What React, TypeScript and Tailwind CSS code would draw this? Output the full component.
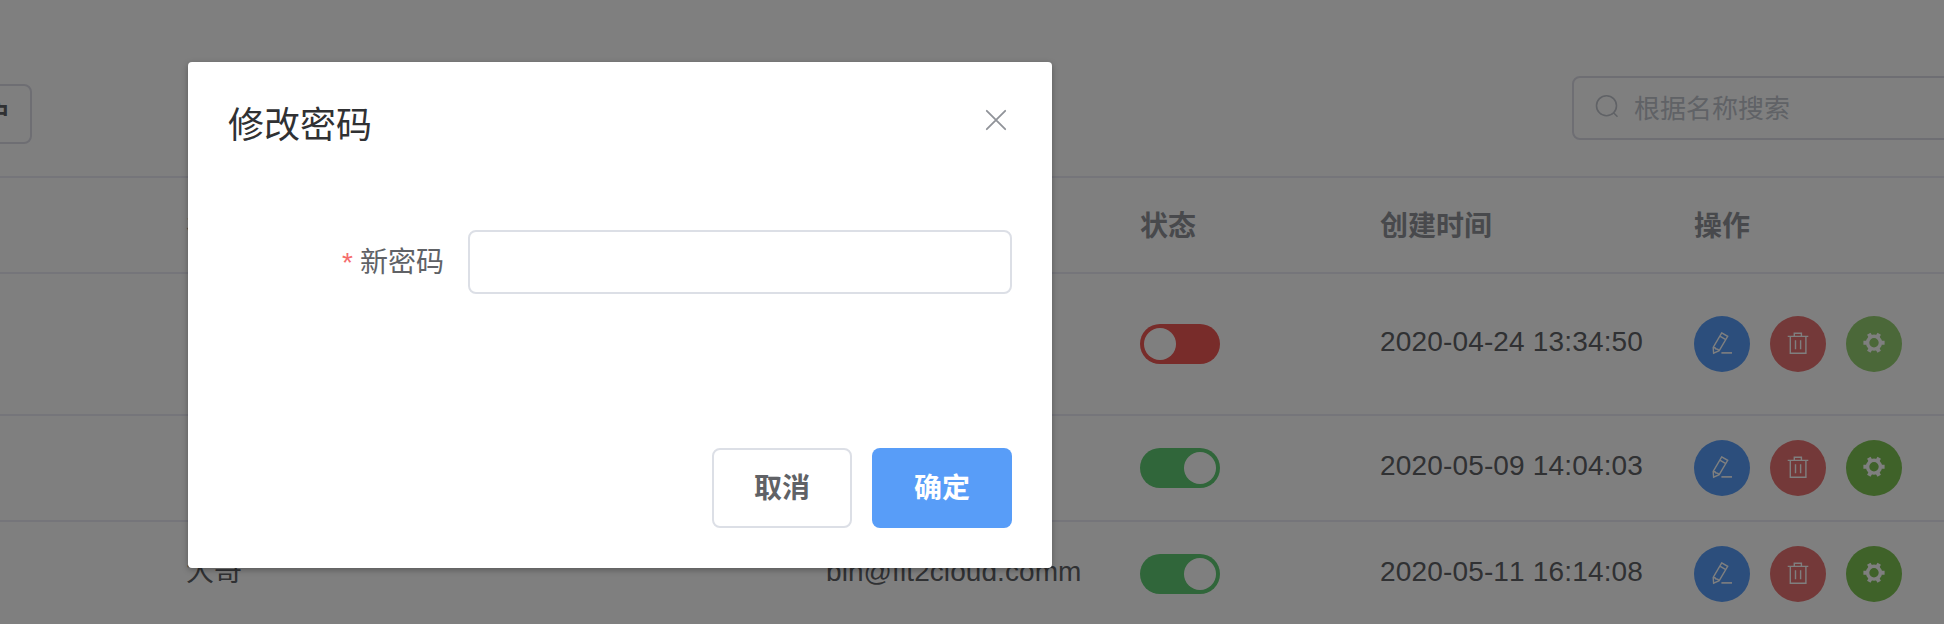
import React from 'react';

const columns =
  'grid grid-cols-[186px_640px_314px_240px_314px_250px] items-center';

function EditIcon() {
  return (
    <svg className="size-7" viewBox="0 0 28 28" fill="none" stroke="#fff" strokeWidth="1.4">
      <path d="M13.7 2.9 19.7 6.3 11.2 20.6 5.6 23.2 5.2 17.4ZM11.9 6.2 17.8 9.7M5.4 17.2 Q7.2 17.3 7.9 19 Q9.9 18.8 11.2 20.6" />
      <path d="M13.4 22.9H24" strokeWidth="1.6" />
    </svg>
  );
}

function DeleteIcon() {
  return (
    <svg className="size-7" viewBox="0 0 28 28" fill="none" stroke="#fff" strokeWidth="1.4">
      <path d="M3.7 6.4H24.3M6.3 6.4V23.3H21.9V6.4M10.3 6.2V3.2H17.4V6.2M11.5 10.2V19.2M16.6 10.2V19.2" />
    </svg>
  );
}

function SettingIcon() {
  return (
    <svg className="size-7" viewBox="0 0 28 28" fill="none" stroke="#fff">
      <circle cx="14" cy="12.7" r="6.4" strokeWidth="3.4" />
      <path
        strokeWidth="4"
        d="M21.2 12.7H24.6M3.4 12.7H6.8M17.6 6.5 19.2 3.7M10.4 6.5 8.8 3.7M17.6 18.9 19.2 21.7M10.4 18.9 8.8 21.7"
      />
    </svg>
  );
}

function Switch({ on }: { on: boolean }) {
  return (
    <div
      className={
        on
          ? 'flex h-10 w-20 justify-end rounded-full bg-[#61cc74] p-1'
          : 'flex h-10 w-20 justify-start rounded-full bg-[#f15854] p-1'
      }
    >
      <div className="size-8 rounded-full bg-white" />
    </div>
  );
}

function Row({ name, email, on, time, height }: { name: string; email: string; on: boolean; time: string; height: string }) {
  return (
    <div className={`${columns} ${height} border-b-2 border-[#ebebf5] text-[28px] text-[#606266] [font-kerning:none]`}>
      <span />
      <span className="pb-1">{name}</span>
      <span className="pb-1 tracking-[0.08px]">{email}</span>
      <Switch on={on} />
      <span className="pb-1 tracking-[0.16px] whitespace-nowrap">{time}</span>
      <div className="flex gap-5">
        <button className="flex size-14 items-center justify-center rounded-full bg-[#589df8]"><EditIcon /></button>
        <button className="flex size-14 items-center justify-center rounded-full bg-[#e87372]"><DeleteIcon /></button>
        <button className={on ? 'flex size-14 items-center justify-center rounded-full bg-[#7ec453]' : 'flex size-14 items-center justify-center rounded-full bg-[#96d072]'}><SettingIcon /></button>
      </div>
    </div>
  );
}

export default function App() {
  return (
    <div className="relative h-[624px] w-[1944px] overflow-hidden bg-white font-['Liberation_Sans','Noto_Sans_CJK_SC',sans-serif]">
      <div className="flex h-44 items-start justify-between">
        <button className="mt-[84px] -ml-[120px] flex h-[60px] w-[152px] items-center justify-end rounded-lg border-2 border-[#dcdce6] pr-[20px] text-2xl font-bold whitespace-nowrap text-[#606266]">
          创建用户
        </button>
        <div className="mt-[76px] -mr-7 flex h-16 w-[400px] items-center rounded-lg border-2 border-[#dcdce6] pl-5">
          <svg className="size-7" viewBox="0 0 28 28" fill="none" stroke="#c0c4cc" strokeWidth="1.6">
            <circle cx="12.5" cy="11.7" r="10" />
            <path d="M19.5 18.7 23.5 22.7" />
          </svg>
          <span className="ml-3 pt-0.5 text-[26px] text-[#c0c4cc]">根据名称搜索</span>
        </div>
      </div>
      <div className={`${columns} h-[98px] border-y-2 border-[#ebebf5] pt-1 text-[28px] font-bold text-[#909399]`}>
        <span />
        <span>名称</span>
        <span>邮箱</span>
        <span>状态</span>
        <span>创建时间</span>
        <span>操作</span>
      </div>
      <Row height="h-[142px]" name="" email="" on={false} time="2020-04-24 13:34:50" />
      <Row height="h-[106px]" name="" email="" on time="2020-05-09 14:04:03" />
      <Row height="h-[106px]" name="大哥" email="bin@fit2cloud.comm" on time="2020-05-11 16:14:08" />

      <div className="absolute inset-0 flex items-start bg-black/50">
        <div className="mt-[62px] ml-[188px] flex h-[506px] w-[864px] flex-col rounded bg-white px-10 shadow-[0_2px_6px_rgba(0,0,0,0.3)]">
          <div className="flex h-[168px] items-start justify-between">
            <h2 className="mt-10 text-[36px] leading-[48px] text-[#303133]">修改密码</h2>
            <svg className="mt-11 mr-0.5 size-7" viewBox="0 0 28 28" fill="none" stroke="#909399" strokeWidth="1.8" strokeLinecap="round">
              <path d="M4.8 4.8 23.2 23.2M23.2 4.8 4.8 23.2" />
            </svg>
          </div>
          <div className="flex h-16 items-center">
            <label className="w-[240px] pt-0.5 pr-6 text-right text-[28px] text-[#606266]">
              <span className="mr-[7px] text-[#f56c6c]">*</span>新密码
            </label>
            <input className="h-16 flex-1 rounded-lg border-2 border-[#dcdfe6] px-7 text-[28px] outline-none" />
          </div>
          <div className="mt-[154px] flex justify-end gap-5 text-[28px] font-bold">
            <button className="h-20 w-[140px] rounded-lg border-2 border-[#dcdfe6] pt-0.5 text-[#606266]">取消</button>
            <button className="h-20 w-[140px] rounded-lg bg-[#589df8] pt-0.5 text-white">确定</button>
          </div>
        </div>
      </div>
    </div>
  );
}
